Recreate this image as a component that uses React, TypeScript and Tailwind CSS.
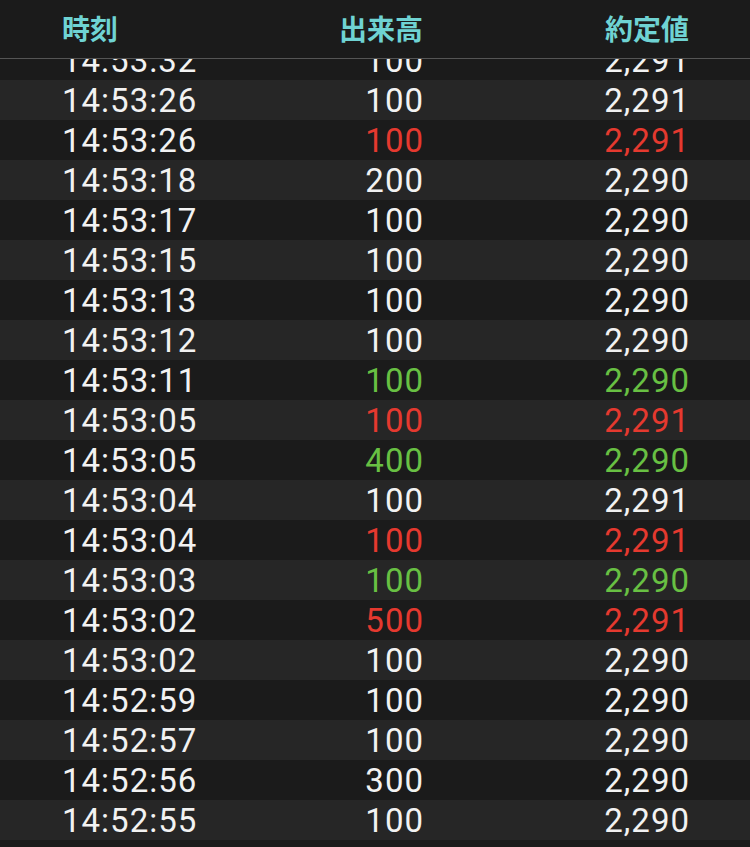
import React from 'react';

type Tone = 'w' | 'r' | 'g';

const rows: [string, string, string, Tone][] = [
  ['14:53:32', '100', '2,291', 'w'],
  ['14:53:26', '100', '2,291', 'w'],
  ['14:53:26', '100', '2,291', 'r'],
  ['14:53:18', '200', '2,290', 'w'],
  ['14:53:17', '100', '2,290', 'w'],
  ['14:53:15', '100', '2,290', 'w'],
  ['14:53:13', '100', '2,290', 'w'],
  ['14:53:12', '100', '2,290', 'w'],
  ['14:53:11', '100', '2,290', 'g'],
  ['14:53:05', '100', '2,291', 'r'],
  ['14:53:05', '400', '2,290', 'g'],
  ['14:53:04', '100', '2,291', 'w'],
  ['14:53:04', '100', '2,291', 'r'],
  ['14:53:03', '100', '2,290', 'g'],
  ['14:53:02', '500', '2,291', 'r'],
  ['14:53:02', '100', '2,290', 'w'],
  ['14:52:59', '100', '2,290', 'w'],
  ['14:52:57', '100', '2,290', 'w'],
  ['14:52:56', '300', '2,290', 'w'],
  ['14:52:55', '100', '2,290', 'w'],
];

const toneClass: Record<Tone, string> = {
  w: 'text-[#f2f2f2]',
  r: 'text-[#e5392f]',
  g: 'text-[#68c043]',
};

export default function App() {
  return (
    <div className="w-[750px] h-[847px] bg-[#1b1b1b] overflow-hidden flex flex-col">
      <div className="h-[59px] shrink-0 border-b border-[#555555] grid grid-cols-[188px_173px_266px] pl-[62px] pb-[3px] items-center font-['Noto_Sans_CJK_JP',sans-serif] font-bold text-[28px] text-[#6fd3d3]">
        <span className="leading-none">時刻</span>
        <span className="leading-none text-right">出来高</span>
        <span className="leading-none text-right">約定値</span>
      </div>

      <div className="flex-1 overflow-hidden">
        <div className="-mt-[19px] font-['Roboto',sans-serif] text-[33px] tracking-[1px]">
          {rows.map(([time, vol, price, tone], i) => (
            <div
              key={i}
              className={`h-[40px] pt-[2px] grid grid-cols-[188px_174px_266px] pl-[62px] items-center leading-[38px] ${i % 2 === 1 ? 'bg-[#262626]' : 'bg-[#1b1b1b]'}`}
            >
              <span className="text-[#f2f2f2]">{time}</span>
              <span className={`text-right ${toneClass[tone]}`}>{vol}</span>
              <span className={`text-right ${toneClass[tone]}`}>{price}</span>
            </div>
          ))}
        </div>
      </div>
    </div>
  );
}
